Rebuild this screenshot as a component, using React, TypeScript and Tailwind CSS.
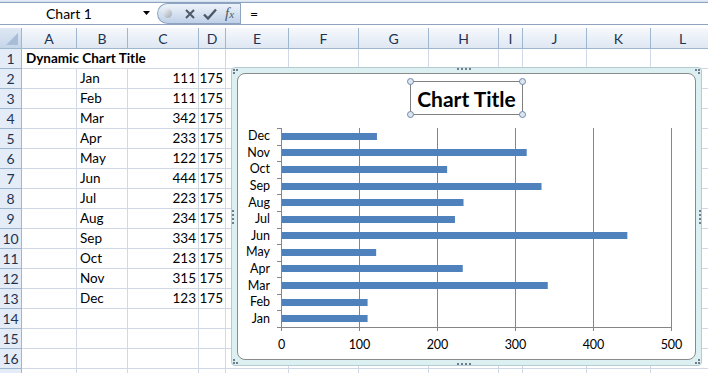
import React from "react";

const cols = [
  { l: "A", w: 55 },
  { l: "B", w: 51 },
  { l: "C", w: 71 },
  { l: "D", w: 27 },
  { l: "E", w: 63 },
  { l: "F", w: 70 },
  { l: "G", w: 70 },
  { l: "H", w: 70 },
  { l: "I", w: 24 },
  { l: "J", w: 64 },
  { l: "K", w: 64 },
  { l: "L", w: 64 },
];

const data: [string, number][] = [
  ["Jan", 111],
  ["Feb", 111],
  ["Mar", 342],
  ["Apr", 233],
  ["May", 122],
  ["Jun", 444],
  ["Jul", 223],
  ["Aug", 234],
  ["Sep", 334],
  ["Oct", 213],
  ["Nov", 315],
  ["Dec", 123],
];

const FONT = { fontFamily: "Lato, 'Open Sans', sans-serif" };

function HeaderCell({ children }: { children?: React.ReactNode }) {
  return (
    <div className="h-[21px] border-r border-b border-[#9eb6ce] bg-gradient-to-b from-[#f6f9fd] to-[#dfe7f2] flex items-center justify-center text-[14px] text-[#1f3350]">
      {children}
    </div>
  );
}

function RowHead({ n }: { n?: number }) {
  return (
    <div className="h-[20px] border-r border-b border-[#9eb6ce] bg-[#e4ecf7] flex items-center justify-center text-[14px] text-[#1f3350]">
      {n}
    </div>
  );
}

function Cell({
  children,
  right,
  span,
  bold,
}: {
  children?: React.ReactNode;
  right?: boolean;
  span?: boolean;
  bold?: boolean;
}) {
  return (
    <div
      className={
        "h-[20px] border-r border-b border-[#d0d7e5] flex items-center whitespace-nowrap text-[13.5px] text-black " +
        (right ? "justify-end pr-[2px] " : "pl-[2px] ") +
        (span ? "col-span-3 " : "") +
        (bold ? "font-bold " : "")
      }
    >
      {children}
    </div>
  );
}

function Sheet() {
  const rows: React.ReactNode[] = [];
  for (let r = 1; r <= 17; r++) {
    rows.push(<RowHead key={"h" + r} n={r <= 16 ? r : undefined} />);
    if (r === 1) {
      rows.push(
        <Cell key="a1" span bold>
          <span className="pl-[2px]">Dynamic Chart Title</span>
        </Cell>
      );
      for (let c = 3; c < cols.length; c++) rows.push(<Cell key={"c1-" + c} />);
    } else if (r <= 13) {
      const [m, v] = data[r - 2];
      rows.push(<Cell key={"a" + r} />);
      rows.push(
        <Cell key={"b" + r}>
          <span className="pl-[1px]">{m}</span>
        </Cell>
      );
      rows.push(
        <Cell key={"c" + r} right>
          {v}
        </Cell>
      );
      rows.push(
        <Cell key={"d" + r} right>
          175
        </Cell>
      );
      for (let c = 4; c < cols.length; c++) rows.push(<Cell key={"x" + r + "-" + c} />);
    } else {
      for (let c = 0; c < cols.length; c++) rows.push(<Cell key={"e" + r + "-" + c} />);
    }
  }
  return (
    <div className="grid w-[715px] grid-cols-[22px_55px_51px_71px_27px_63px_70px_70px_70px_24px_64px_64px_64px]">
      <div className="h-[21px] border-r border-b border-[#9eb6ce] bg-gradient-to-b from-[#dfe8f4] to-[#c6d6ea] relative">
        <svg className="absolute right-[3px] bottom-[3px]" width="12" height="12" viewBox="0 0 12 12">
          <polygon points="12,0 12,12 0,12" fill="#a9bdd8" />
        </svg>
      </div>
      {cols.map((c) => (
        <HeaderCell key={c.l}>{c.l}</HeaderCell>
      ))}
      {rows}
    </div>
  );
}

function FormulaBar() {
  return (
    <div className="h-[28px] flex flex-col">
      <div className="h-[3px] bg-gradient-to-b from-[#e9f0f8] to-[#cfdcec] border-b border-[#8ea3c0]" />
      <div className="h-[22px] flex border-b border-[#8ea3c0] bg-white">
        <div className="w-[157px] flex items-center relative">
          <span className="pl-[46px] text-[14px] text-black">Chart 1</span>
          <svg className="absolute left-[143px] top-[8px]" width="8" height="5" viewBox="0 0 8 5">
            <polygon points="0,0 7,0 3.5,4" fill="#000" />
          </svg>
        </div>
        <div className="w-[83px] h-[21px] rounded-l-full border border-r-0 border-[#8ea3c0] bg-gradient-to-b from-[#eef3fa] via-[#d6e2f1] to-[#bfd0e7] flex items-center">
          <div className="ml-[5px] w-[9px] h-[9px] rounded-full bg-gradient-to-br from-[#f4f6f8] to-[#9ea8b4]" />
          <svg className="ml-[12px]" width="12" height="12" viewBox="0 0 12 12">
            <path d="M2 2 L10 10 M10 2 L2 10" stroke="#4f5866" strokeWidth="2" />
          </svg>
          <svg className="ml-[7px]" width="14" height="12" viewBox="0 0 14 12">
            <path d="M1 6.5 L5 10.5 L13 1.5" stroke="#4f5866" strokeWidth="2.4" fill="none" />
          </svg>
          <span
            className="ml-[8px] text-[15px] italic text-[#4f5866] leading-none"
            style={{ fontFamily: "'Liberation Serif', serif" }}
          >
            f<span className="text-[11px]">x</span>
          </span>
        </div>
        <div className="flex-1 border-l border-[#8ea3c0] flex items-center pl-[9px] text-[14px] text-black">=</div>
      </div>
      <div className="flex-1 bg-white" />
    </div>
  );
}

function Dots({ vertical, className }: { vertical?: boolean; className: string }) {
  return (
    <div className={"absolute flex gap-[2px] " + (vertical ? "flex-col " : "") + className}>
      {[0, 1, 2, 3].map((i) => (
        <div key={i} className="w-[2px] h-[2px] bg-[#6f7d8c]" />
      ))}
    </div>
  );
}

function Handle({ className }: { className: string }) {
  return (
    <div
      className={
        "absolute w-[7px] h-[7px] rounded-full border border-[#6d88a8] bg-[#dbe6f2] " + className
      }
    />
  );
}

function Chart() {
  const x0 = 281;
  const k = 0.78;
  const top = 128;
  const bottom = 327;
  const step = (bottom - top) / 12;
  const cats = [...data].reverse();
  return (
    <div className="absolute left-[231px] top-[67px] w-[471px] h-[299px] rounded-[4px] border border-[#b4ccd1] bg-[#dcf0f2] p-[5px]">
      <div className="relative w-full h-full rounded-[8px] border border-[#8a8a8a] bg-white">
        <svg
          className="absolute left-[-1px] top-[-1px]"
          width="458"
          height="287"
          viewBox="237 73 458 287"
          style={FONT}
        >
          {[100, 200, 300, 400, 500].map((v) => (
            <line
              key={v}
              x1={x0 + v * k + 0.5}
              x2={x0 + v * k + 0.5}
              y1={top}
              y2={bottom + 4}
              stroke="#868686"
              strokeWidth="1"
            />
          ))}
          <line x1={x0 + 0.5} x2={x0 + 0.5} y1={top} y2={bottom + 4} stroke="#868686" />
          <line x1={x0} x2={x0 + 500 * k + 1} y1={bottom + 0.5} y2={bottom + 0.5} stroke="#868686" />
          {Array.from({ length: 13 }).map((_, i) => (
            <line
              key={i}
              x1={x0 - 4}
              x2={x0}
              y1={Math.round(top + i * step) + 0.5}
              y2={Math.round(top + i * step) + 0.5}
              stroke="#868686"
            />
          ))}
          {cats.map(([m, v], i) => {
            const cy = top + step * (i + 0.5);
            return (
              <g key={m}>
                <rect x={x0 + 1} y={Math.round(cy - 3.5)} width={v * k - 1} height={7} fill="#4f81bd" />
                <text x={270} y={cy + 4} textAnchor="end" fontSize="12.5" fill="#000">
                  {m}
                </text>
              </g>
            );
          })}
          {[0, 100, 200, 300, 400, 500].map((v) => (
            <text key={v} x={x0 + v * k + 0.5} y={349} textAnchor="middle" fontSize="12.5" fill="#000">
              {v}
            </text>
          ))}
        </svg>
        <div className="absolute left-[172px] top-[7px] w-[113px] h-[34px] border border-[#808080] flex items-center justify-center">
          <span className="text-[21px] font-bold text-black leading-none">Chart Title</span>
          <Handle className="left-[-4px] top-[-4px]" />
          <Handle className="right-[-4px] top-[-4px]" />
          <Handle className="left-[-4px] bottom-[-4px]" />
          <Handle className="right-[-4px] bottom-[-4px]" />
        </div>
      </div>
      <Dots className="left-[225px] top-[0px]" />
      <Dots className="left-[225px] bottom-[0px]" />
      <Dots vertical className="left-[0px] top-[142px]" />
      <Dots vertical className="right-[0px] top-[142px]" />
      <div className="absolute left-[1px] top-[1px] grid grid-cols-2 gap-[1px]">
        <div className="w-[2px] h-[2px] bg-[#6f7d8c]" />
        <div className="w-[2px] h-[2px] bg-[#6f7d8c]" />
        <div className="w-[2px] h-[2px] bg-[#6f7d8c]" />
      </div>
      <div className="absolute right-[1px] top-[1px] grid grid-cols-2 gap-[1px]">
        <div className="w-[2px] h-[2px] bg-[#6f7d8c]" />
        <div className="w-[2px] h-[2px] bg-[#6f7d8c]" />
        <div />
        <div className="w-[2px] h-[2px] bg-[#6f7d8c]" />
      </div>
      <div className="absolute left-[1px] bottom-[1px] grid grid-cols-2 gap-[1px]">
        <div className="w-[2px] h-[2px] bg-[#6f7d8c]" />
        <div />
        <div className="w-[2px] h-[2px] bg-[#6f7d8c]" />
        <div className="w-[2px] h-[2px] bg-[#6f7d8c]" />
      </div>
      <div className="absolute right-[1px] bottom-[1px] grid grid-cols-2 gap-[1px]">
        <div />
        <div className="w-[2px] h-[2px] bg-[#6f7d8c]" />
        <div className="w-[2px] h-[2px] bg-[#6f7d8c]" />
        <div className="w-[2px] h-[2px] bg-[#6f7d8c]" />
      </div>
    </div>
  );
}

export default function App() {
  return (
    <div className="relative w-[708px] h-[373px] overflow-hidden bg-white" style={FONT}>
      <FormulaBar />
      <Sheet />
      <Chart />
    </div>
  );
}
